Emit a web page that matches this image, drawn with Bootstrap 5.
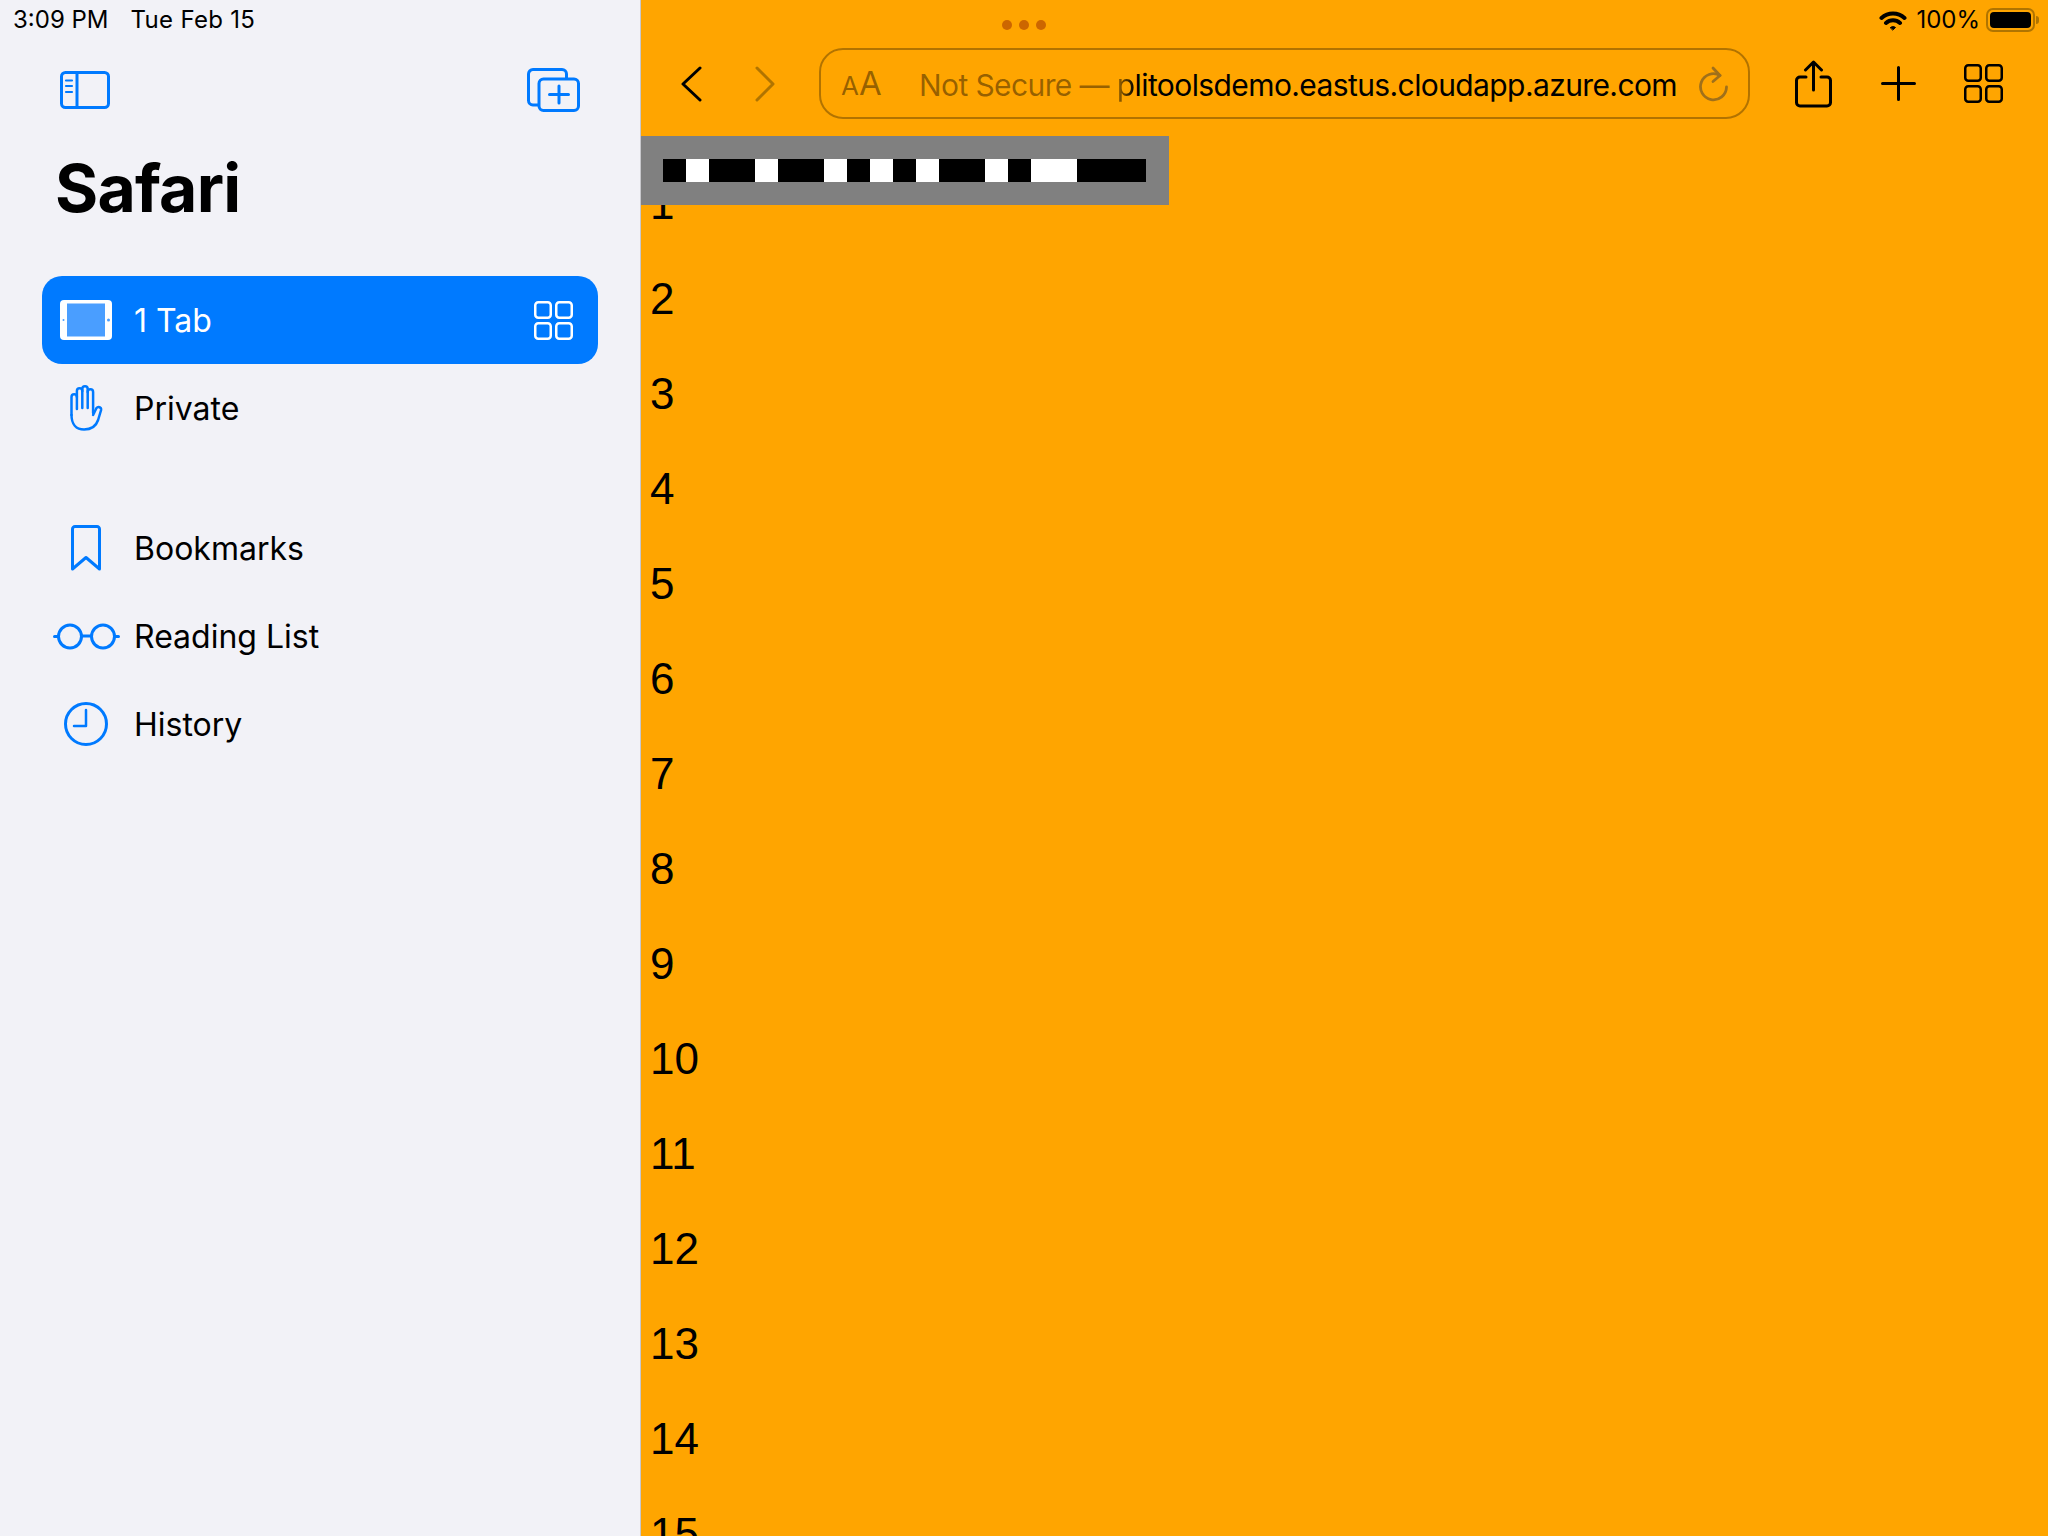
<!DOCTYPE html>
<html lang="en">
<head>
  <meta charset="UTF-8" />
  <meta name="viewport" content="width=device-width, initial-scale=1.0"/>
  <title>Safari on iPad</title>
  <link href="https://cdn.jsdelivr.net/npm/bootstrap@5.3.2/dist/css/bootstrap.min.css" rel="stylesheet" />
  <style>
    body { height: 1536px; overflow: hidden; background: #ffa500; font-family: "Inter", "Liberation Sans", sans-serif; color: #000; }
    svg { display: block; flex: none; fill: none; stroke-linecap: round; stroke-linejoin: round; }
    .side-pane { width: 641px; flex: none; background: #f2f2f7; border-right: 1px solid #c8c8cc; }
    .status-row { height: 40px; font-size: 24px; }
    .status-time { padding-left: 13px; }
    .status-date { margin-left: 22px; letter-spacing: .3px; }
    .side-tools { height: 46px; margin-top: 27px; padding: 0 60px 0 60px; }
    .side-title { font-size: 66px; font-weight: 700; line-height: 78px; margin: 36px 0 0 55px; letter-spacing: -.8px; }
    .side-list { margin: 49px 42px 0 42px; }
    .side-list .list-group-item { height: 88px; padding: 0 25px 0 0; border: 0; background: transparent; font-size: 32px; color: #000; border-radius: 20px; }
    .side-list .list-group-item.active { background: #007aff; color: #fff; }
    .side-list .gap-top { margin-top: 52px; }
    .icon-slot { width: 88px; margin-right: 4px; flex: none; }
    .row-label { padding-top: 1px; }
    .blue-ic { stroke: #007aff; }
    .web-pane { min-width: 0; }
    .top-bar { height: 136px; position: relative; }
    .dots { position: absolute; top: 20px; left: 361px; gap: 7px; }
    .dots i { width: 10px; height: 10px; border-radius: 50%; background: #cc6600; }
    .status-right { padding-right: 9px; }
    .tool-row { height: 71px; margin-top: 8px; }
    .back-ic { margin-left: 40px; }
    .fwd-ic { margin-left: 53px; }
    .url-box { width: 931px; height: 71px; margin-left: 44px; border: 2.5px solid rgba(0,0,0,.3); border-radius: 24px; padding: 0 19px 0 20px; font-size: 30px; white-space: nowrap; }
    .aa-small { font-size: 26px; }
    .aa-big { font-size: 33px; }
    .aa-box { color: rgba(0,0,0,.42); width: 78px; flex: none; line-height: 1; }
    .url-dim { color: rgba(0,0,0,.42); }
    .url-fade { background: linear-gradient(90deg, rgba(0,0,0,.35), #000); -webkit-background-clip: text; background-clip: text; color: transparent; }
    .url-text { flex: 1; letter-spacing: -.6px; padding-top: 3px; min-width: 0; }
    .share-ic { margin-left: 45px; }
    .plus-ic { margin-left: 49px; }
    .grid-ic { margin-left: 48px; }
    .bat-box { width: 49px; height: 24px; border: 2.5px solid #b07400; border-radius: 7px; padding: 2px; margin-left: 6px; }
    .bat-fill { background: #000; border-radius: 4px; height: 100%; }
    .bat-nub { width: 3px; height: 8px; background: #b07400; border-radius: 0 3px 3px 0; margin-left: 1px; }
    .pct { margin-left: 9px; }
    .banner { position: absolute; top: 136px; left: 0; width: 528px; height: 69px; background: #808080; padding: 23px 0 0 22px; }
    .strip { width: 483px; height: 23px; }
    .strip i { height: 23px; }
    .s1 { width: 23px; } .s2 { width: 46px; } .s3 { width: 69px; }
    .on { background: #000; } .off { background: #fff; }
    .num-list { padding: 20px 0 0 9px; font-family: "Liberation Sans", Arial, sans-serif; font-size: 44px; line-height: 95px; }
  </style>
</head>
<body class="d-flex">

  <!-- sidebar -->
  <aside class="side-pane d-flex flex-column">
    <div class="status-row status-time d-flex align-items-center">
      <span>3:09 PM</span><span class="status-date">Tue Feb 15</span>
    </div>
    <div class="side-tools d-flex justify-content-between align-items-center">
      <svg class="blue-ic" width="50" height="38" viewBox="0 0 50 38" stroke-width="3">
        <rect x="1.5" y="1.5" width="47" height="35" rx="4"/>
        <path d="M17 1.5v35"/>
        <path d="M6 9.5h6M6 15h6M6 21h6" stroke-width="2.2"/>
      </svg>
      <svg class="blue-ic" width="53" height="44" viewBox="0 0 53 44" stroke-width="3">
        <path d="M11 37H6a4.500 4.500 0 0 1-4.500-4.500V6A4.500 4.500 0 0 1 6 1.500h29A4.500 4.500 0 0 1 39.500 6v4"/>
        <rect x="12" y="11" width="39.500" height="31.500" rx="4.500"/>
        <path d="M32 18v17M22.500 26.500h19"/>
      </svg>
    </div>
    <h1 class="side-title">Safari</h1>
    <div class="list-group side-list">
      <div class="list-group-item active d-flex align-items-center">
        <span class="icon-slot d-flex justify-content-center">
          <svg width="52" height="40" viewBox="0 0 52 40">
            <rect width="52" height="40" rx="4" fill="#fff"/>
            <rect x="7" y="3.500" width="38" height="33" fill="#4a9eff"/>
            <circle cx="3.500" cy="20" r="1" fill="#4a9eff"/>
            <circle cx="48.500" cy="20" r="1.500" fill="#4a9eff"/>
          </svg>
        </span>
        <span class="row-label flex-grow-1">1 Tab</span>
        <svg width="39" height="39" viewBox="0 0 39 39" stroke="#fff" stroke-width="2.500">
          <rect x="1.250" y="1.250" width="15.500" height="15.500" rx="3"/>
          <rect x="22.250" y="1.250" width="15.500" height="15.500" rx="3"/>
          <rect x="1.250" y="22.250" width="15.500" height="15.500" rx="3"/>
          <rect x="22.250" y="22.250" width="15.500" height="15.500" rx="3"/>
        </svg>
      </div>
      <div class="list-group-item d-flex align-items-center">
        <span class="icon-slot d-flex justify-content-center">
          <svg class="blue-ic" width="34" height="46" viewBox="0 0 34 46" stroke-width="2.500">
            <path d="M2.500 30V12a2.700 2.700 0 0 1 5.400 0v12"/>
            <path d="M7.900 12V6a2.700 2.700 0 0 1 5.400 0v17"/>
            <path d="M13.300 6V4a2.700 2.700 0 0 1 5.400 0v19"/>
            <path d="M18.700 7a2.700 2.700 0 0 1 5.400 0v21"/>
            <path d="M24.100 30l3.400-7a2.600 2.600 0 0 1 4.600 2l-3 10c-2 6-7 9.500-14 9.500-8 0-12.600-5.500-12.600-14.500"/>
          </svg>
        </span>
        <span class="row-label">Private</span>
      </div>
      <div class="list-group-item gap-top d-flex align-items-center">
        <span class="icon-slot d-flex justify-content-center">
          <svg class="blue-ic" width="30" height="46" viewBox="0 0 30 46" stroke-width="3">
            <path d="M1.500 44V4a2.500 2.500 0 0 1 2.500-2.500h22a2.500 2.500 0 0 1 2.500 2.500v40L15 32.500z"/>
          </svg>
        </span>
        <span class="row-label">Bookmarks</span>
      </div>
      <div class="list-group-item d-flex align-items-center">
        <span class="icon-slot d-flex justify-content-center">
          <svg class="blue-ic" width="67" height="27" viewBox="0 0 67 27" stroke-width="3">
            <circle cx="17" cy="13.500" r="11.500"/>
            <circle cx="50" cy="13.500" r="11.500"/>
            <path d="M1.500 13.500h4M28.500 13h10M61.500 13.500h4"/>
          </svg>
        </span>
        <span class="row-label">Reading List</span>
      </div>
      <div class="list-group-item d-flex align-items-center">
        <span class="icon-slot d-flex justify-content-center">
          <svg class="blue-ic" width="44" height="44" viewBox="0 0 44 44" stroke-width="3">
            <circle cx="22" cy="22" r="20.500"/>
            <path d="M22 8v16H10" stroke-width="2.500"/>
          </svg>
        </span>
        <span class="row-label">History</span>
      </div>
    </div>
  </aside>

  <!-- web view -->
  <main class="web-pane flex-grow-1 position-relative overflow-hidden">
    <div class="top-bar">
      <div class="dots d-flex"><i></i><i></i><i></i></div>
      <div class="status-row status-right d-flex justify-content-end align-items-center">
        <svg width="28" height="21" viewBox="0 0 28 21" stroke="#000" stroke-width="4">
          <path d="M2.500 8c6.500-6 16.500-6 23 0M7 13c4-3.600 10-3.600 14 0"/>
          <path d="M11.500 17.500c1.500-1.200 3.500-1.200 5 0l-2.500 2.300z" fill="#000" stroke-width="1"/>
        </svg>
        <span class="pct">100%</span>
        <div class="bat-box"><div class="bat-fill"></div></div>
        <div class="bat-nub"></div>
      </div>
      <div class="tool-row d-flex align-items-center">
        <svg class="back-ic" width="21" height="36" viewBox="0 0 21 36" stroke="#000" stroke-width="3"><path d="M19 2 2 18l17 16"/></svg>
        <svg class="fwd-ic" width="20" height="36" viewBox="0 0 20 36" stroke="#b07400" stroke-width="3"><path d="M2 2l16 16L2 34"/></svg>
        <div class="url-box d-flex align-items-center">
          <span class="aa-box"><span class="aa-small">A</span><span class="aa-big">A</span></span>
          <span class="url-text"><span class="url-dim">Not Secure — </span><span class="url-fade">p</span>litoolsdemo.eastus.cloudapp.azure.com</span>
          <svg width="30" height="36" viewBox="0 0 30 36" stroke="#a0701a" stroke-width="2.800">
            <path d="M21 9.500A13 13 0 1 0 27.500 21"/>
            <path d="M14 2l7 7.500-7 6"/>
          </svg>
        </div>
        <svg class="share-ic" width="37" height="48" viewBox="0 0 37 48" stroke="#000" stroke-width="3">
          <path d="M11 17H5a3.500 3.500 0 0 0-3.500 3.500v22A3.500 3.500 0 0 0 5 46h27a3.500 3.500 0 0 0 3.500-3.500v-22A3.500 3.500 0 0 0 32 17h-6"/>
          <path d="M18.500 30V2M10.500 10l8-8 8 8"/>
        </svg>
        <svg class="plus-ic" width="35" height="35" viewBox="0 0 35 35" stroke="#000" stroke-width="3"><path d="M17.500 1.500v32M1.500 17.500h32"/></svg>
        <svg class="grid-ic" width="39" height="39" viewBox="0 0 39 39" stroke="#000" stroke-width="2.500">
          <rect x="1.250" y="1.250" width="15.500" height="15.500" rx="3"/>
          <rect x="22.250" y="1.250" width="15.500" height="15.500" rx="3"/>
          <rect x="1.250" y="22.250" width="15.500" height="15.500" rx="3"/>
          <rect x="22.250" y="22.250" width="15.500" height="15.500" rx="3"/>
        </svg>
      </div>
    </div>

    <div class="banner">
      <div class="strip d-flex" id="strip"></div>
    </div>

    <div class="num-list" id="numList"></div>
  </main>

  <script src="https://cdn.jsdelivr.net/npm/bootstrap@5.3.2/dist/js/bootstrap.bundle.min.js"></script>
  <script>
    // masked strip: run lengths, alternating black and white
    const runs = [1, 1, 2, 1, 2, 1, 1, 1, 1, 1, 2, 1, 1, 2, 3];
    const strip = document.getElementById("strip");
    runs.forEach((n, i) => {
      const seg = document.createElement("i");
      seg.className = "s" + n + (i % 2 ? " off" : " on");
      strip.appendChild(seg);
    });

    const numList = document.getElementById("numList");
    for (let n = 1; n <= 15; n++) {
      const line = document.createElement("div");
      line.textContent = n;
      numList.appendChild(line);
    }
  </script>
</body>
</html>
